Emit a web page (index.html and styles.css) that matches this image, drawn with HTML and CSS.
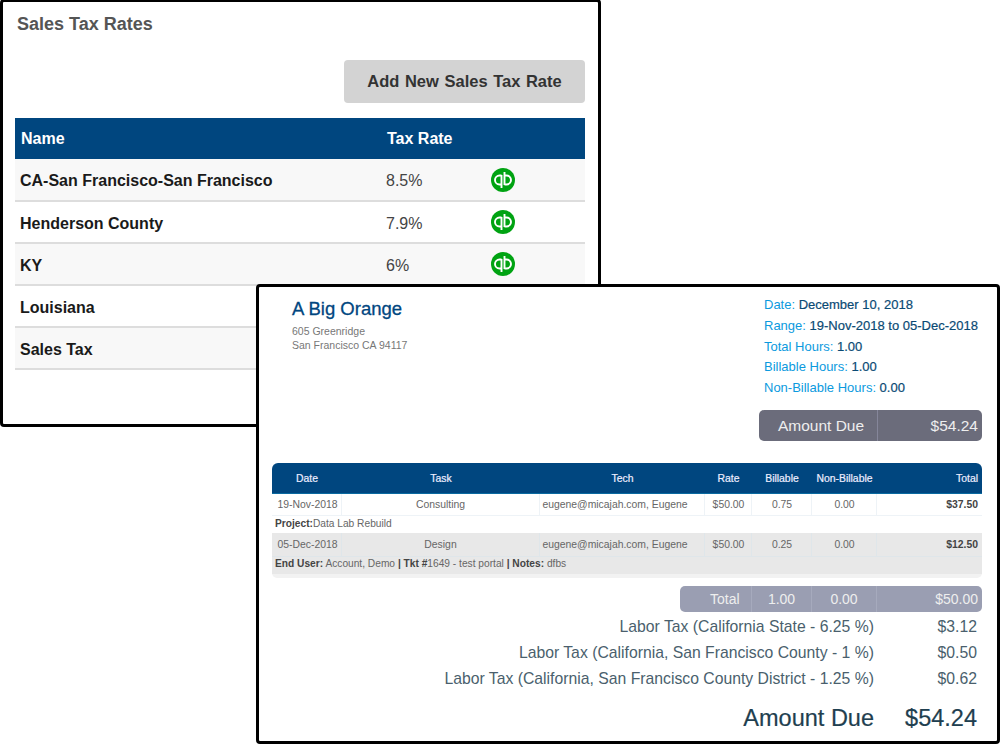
FILE: index.html
```html
<!DOCTYPE html>
<html lang="en">
<head>
<meta charset="utf-8">
<title>Sales Tax Rates and Invoice</title>
<link rel="stylesheet" href="styles.css">
</head>
<body>
<div class="canvas">
  <section class="window rates">
    <h1 class="rates-title">Sales Tax Rates</h1>
    <div class="rates-actions"><button class="add-btn">Add New Sales Tax Rate</button></div>
    <div class="rates-head"><span class="c-name">Name</span><span class="c-rate">Tax Rate</span></div>
    <div class="rate-row odd"><span class="c-name">CA-San Francisco-San Francisco</span><span class="c-val">8.5%</span>
      <svg class="qb" viewBox="0 0 24 24"><circle cx="12" cy="12" r="12" fill="#00a312"/><path d="M10.500 7v13M13.500 4v13M10.500 7.500H8.500a4.500 4.500 0 0 0 0 9h2M13.500 7.500h2a4.500 4.500 0 0 1 0 9h-2" fill="none" stroke="#fff" stroke-width="1.900"/></svg></div>
    <div class="rate-row"><span class="c-name">Henderson County</span><span class="c-val">7.9%</span>
      <svg class="qb" viewBox="0 0 24 24"><circle cx="12" cy="12" r="12" fill="#00a312"/><path d="M10.500 7v13M13.500 4v13M10.500 7.500H8.500a4.500 4.500 0 0 0 0 9h2M13.500 7.500h2a4.500 4.500 0 0 1 0 9h-2" fill="none" stroke="#fff" stroke-width="1.900"/></svg></div>
    <div class="rate-row odd"><span class="c-name">KY</span><span class="c-val">6%</span>
      <svg class="qb" viewBox="0 0 24 24"><circle cx="12" cy="12" r="12" fill="#00a312"/><path d="M10.500 7v13M13.500 4v13M10.500 7.500H8.500a4.500 4.500 0 0 0 0 9h2M13.500 7.500h2a4.500 4.500 0 0 1 0 9h-2" fill="none" stroke="#fff" stroke-width="1.900"/></svg></div>
    <div class="rate-row"><span class="c-name">Louisiana</span></div>
    <div class="rate-row odd"><span class="c-name">Sales Tax</span></div>
  </section>

  <section class="window invoice">
    <div class="inv-top">
      <div class="company">
        <h2 class="company-name">A Big Orange</h2>
        <p class="company-addr">605 Greenridge<br>San Francisco CA 94117</p>
      </div>
      <div class="summary">
        <ul class="meta">
          <li>Date: <b>December 10, 2018</b></li>
          <li>Range: <b>19-Nov-2018 to 05-Dec-2018</b></li>
          <li>Total Hours: <b>1.00</b></li>
          <li>Billable Hours: <b>1.00</b></li>
          <li>Non-Billable Hours: <b>0.00</b></li>
        </ul>
        <div class="due-box"><span class="due-label">Amount Due</span><span class="due-value">$54.24</span></div>
      </div>
    </div>

    <div class="items">
      <div class="g g-head"><span>Date</span><span>Task</span><span>Tech</span><span>Rate</span><span>Billable</span><span>Non-Billable</span><span class="r">Total</span></div>
      <div class="g g-row"><span>19-Nov-2018</span><span>Consulting</span><span class="tech">eugene@micajah.com, Eugene</span><span>$50.00</span><span>0.75</span><span>0.00</span><span class="r strong">$37.50</span></div>
      <div class="note"><b>Project:</b>Data Lab Rebuild</div>
      <div class="g g-row alt"><span>05-Dec-2018</span><span>Design</span><span class="tech">eugene@micajah.com, Eugene</span><span>$50.00</span><span>0.25</span><span>0.00</span><span class="r strong">$12.50</span></div>
      <div class="note alt2"><b>End User:</b> Account, Demo <b>|</b> <b>Tkt #</b>1649 - test portal <b>|</b> <b>Notes:</b> dfbs</div>
    </div>

    <div class="totals"><span class="t-label">Total</span><span>1.00</span><span>0.00</span><span class="r">$50.00</span></div>

    <div class="tax-row first"><span>Labor Tax (California State - 6.25 %)</span><span class="tax-amt">$3.12</span></div>
    <div class="tax-row"><span>Labor Tax (California, San Francisco County - 1 %)</span><span class="tax-amt">$0.50</span></div>
    <div class="tax-row"><span>Labor Tax (California, San Francisco County District - 1.25 %)</span><span class="tax-amt">$0.62</span></div>
    <div class="grand"><span>Amount Due</span><span class="grand-amt">$54.24</span></div>
  </section>
</div>
</body>
</html>
```
FILE: styles.css
```css
* { box-sizing: border-box; }
html, body { margin: 0; padding: 0; background: #fff; }
body { font-family: "Liberation Sans", Arial, sans-serif; }
.canvas { position: relative; width: 1000px; height: 744px; overflow: hidden; }
.window { position: absolute; background: #fff; border: 3px solid #000; border-radius: 4px; }

/* back window */
.rates { left: 0; top: -1px; width: 601px; height: 428px; padding: 0 13px 0 12px; }
.rates-title { margin: 12px 0 0 2px; font-size: 18px; line-height: 21px; font-weight: 700; color: #555; }
.rates-actions { display: flex; justify-content: flex-end; margin-top: 25px; }
.add-btn { width: 241px; height: 43px; border: 0; border-radius: 4px; background: #d3d3d3; color: #333; font: 700 16.500px "Liberation Sans", Arial, sans-serif; word-spacing: 1px; }
.rates-head { display: flex; align-items: center; height: 41px; margin-top: 15px; padding-top: 1px; background: #00467f; color: #fff; font-size: 16px; font-weight: 700; }
.rates-head .c-name { padding-left: 6px; }
.c-rate { margin-left: 1px; }
.rate-row { display: flex; align-items: center; height: 42px; padding-top: 3px; border-bottom: 2px solid #ddd; background: #fff; color: #222; font-size: 16px; }
.rate-row:nth-child(4) { height: 43px; }
.rate-row.odd { background: #f8f8f8; }
.c-name { display: block; width: 371px; padding-left: 5px; flex: none; }
.rate-row .c-name { font-weight: 700; color: #1a1a1a; }
.c-val { width: 105px; flex: none; color: #444; }
.qb { width: 24px; height: 24px; margin-top: -3px; flex: none; }

/* front window */
.invoice { left: 256px; top: 284px; width: 744px; height: 460px; padding: 0 15px 0 13px; color: #345; }
.inv-top { display: flex; justify-content: space-between; height: 176px; }
.company { padding: 10px 0 0 20px; }
.company-name { margin: 0; font-size: 18.500px; line-height: 24px; font-weight: 400; color: #00467f; -webkit-text-stroke: .3px #00467f; }
.company-addr { margin: 3px 0 0; font-size: 10.500px; line-height: 14px; color: #777; }
.summary { width: 223px; }
.meta { list-style: none; margin: 8px 0 0; padding: 0 0 0 5px; font-size: 13px; line-height: 20.800px; color: #0b9ade; white-space: nowrap; }
.meta b { font-weight: 400; color: #0a4a74; -webkit-text-stroke: .2px #0a4a74; }
.due-box { display: flex; height: 31px; margin-top: 11px; border-radius: 5px; background: #6b6c7b; color: #eee; font-size: 15.500px; line-height: 31px; }
.due-label { width: 119px; text-align: center; border-right: 1px solid #85869a; padding-left: 6px; }
.due-value { flex: 1; text-align: right; padding-right: 4px; }

.items { height: 115px; border-radius: 6px 6px 5px 5px; border-bottom: 4px solid #f2f2f2; font-size: 10.400px; color: #666; }
.g { display: grid; grid-template-columns: 70px 198px 165px 47px 60px 65px 105px; text-align: center; }
.g .r { text-align: right; padding-right: 4px; }
.g-head { height: 31px; line-height: 31px; background: #00467f; color: #eef; border-radius: 6px 6px 0 0; border-bottom: 1px solid #0a6aa0; -webkit-text-stroke: .2px #eef; }
.g-row { height: 21px; line-height: 21px; }
.g-row span { border-right: 1px solid #eef3f7; border-bottom: 1px solid #eef3f7; }
.g-row span:first-child { padding-left: 2px; }
.g-row .tech { padding-right: 14px; }
.g-row span:nth-child(n+4) { padding-left: 1px; }
.g-row span:last-child { border-right: 0; }
.strong { font-weight: 700; color: #444; }
.g-row.alt { background: #e8e8e8; line-height: 23px; }
.g-row.alt span { border-color: #dfe6ea; }
.note { height: 18px; line-height: 17px; padding-left: 3px; font-size: 10.200px; }
.note b { color: #444; }
.note.alt2 { height: 20px; line-height: 19px; background: #e8e8e8; }

.totals { display: grid; grid-template-columns: 72px 60px 65px 105px; width: 302px; height: 26px; margin: 8px 0 0 auto; border-radius: 5px; background: #9a9eb2; color: #eee; font-size: 14px; line-height: 26px; text-align: center; }
.totals span { border-right: 1px solid #a6aabd; }
.totals .t-label { text-align: left; padding-left: 30px; }
.totals .r { border-right: 0; text-align: right; padding-right: 4px; }

.tax-row { display: flex; justify-content: flex-end; height: 26px; margin-right: 5px; font-size: 15.750px; line-height: 26px; color: #4a5f6d; }
.tax-row.first { margin-top: 2px; }
.tax-amt { width: 103px; text-align: right; }
.grand { display: flex; justify-content: flex-end; margin: 12px 5px 0 0; font-size: 23.500px; line-height: 28px; color: #1f3f50; -webkit-text-stroke: .2px #1f3f50; }
.grand-amt { width: 103px; text-align: right; }
```
